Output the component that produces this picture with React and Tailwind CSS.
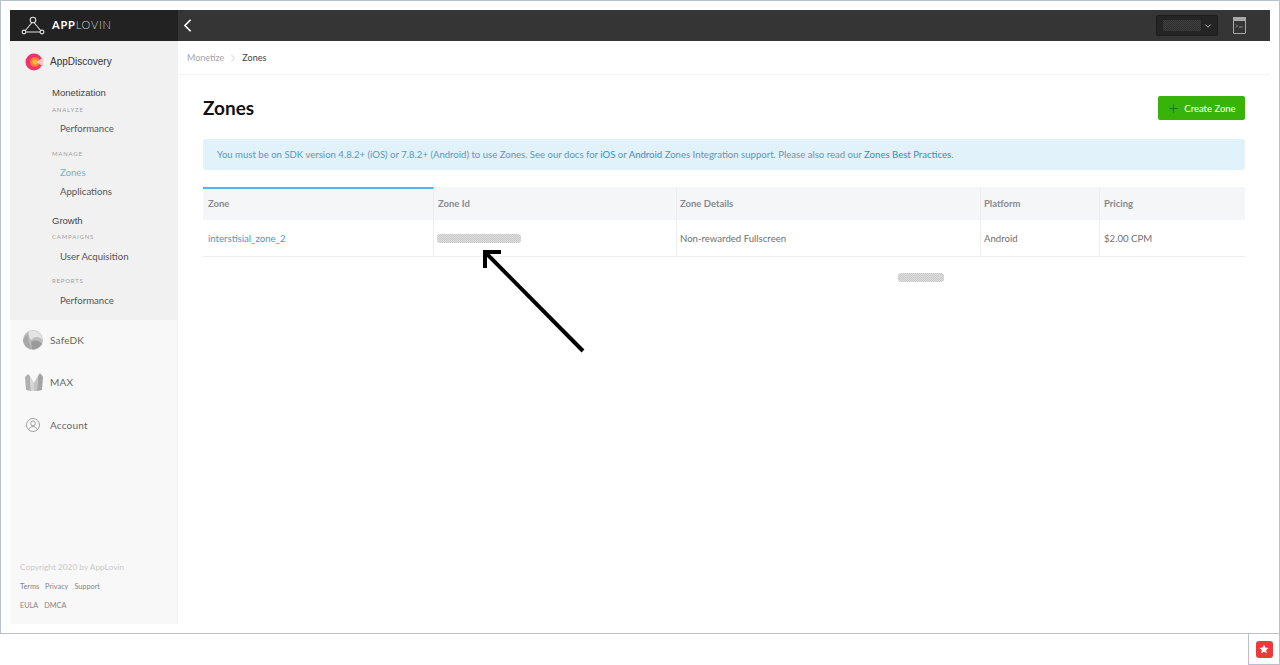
import React from 'react';
import { ChevronLeft, ChevronDown, ChevronRight, Plus } from 'lucide-react';

const dither = 'bg-[repeating-conic-gradient(#c9c9c9_0_25%,#dedede_0_50%)] bg-[length:2px_2px]';

const Logo = () => (
  <svg width="24" height="22" viewBox="0 0 24 22" fill="none" stroke="#e0e0e0" strokeWidth="1.1">
    <path d="M11 7.5 L4 16 M13 7.5 L20 16 M5 17 H19" />
    <circle cx="12" cy="5" r="2.8" />
    <circle cx="3" cy="17" r="1.9" />
    <circle cx="21" cy="17" r="1.9" />
  </svg>
);

const DiscoveryIcon = () => (
  <svg width="18" height="18" viewBox="0 0 18 18">
    <defs>
      <linearGradient id="disc" x1="0" y1="0" x2="1" y2="1">
        <stop offset="0" stopColor="#ef2f6a" />
        <stop offset="1" stopColor="#f0386b" />
      </linearGradient>
    </defs>
    <circle cx="9" cy="9" r="8.5" fill="url(#disc)" />
    <circle cx="10" cy="9" r="5" fill="#fb7a3a" />
    <circle cx="10" cy="9" r="2.6" fill="#fdbb2d" />
    <path d="M11 9 L17.5 5 A8.5 8.5 0 0 1 17.5 13 Z" fill="#fbc4c4" />
  </svg>
);

const SafeIcon = () => (
  <svg width="20" height="20" viewBox="0 0 20 20">
    <circle cx="10" cy="10" r="10" fill="#bdbdbd" />
    <path d="M6 1 C12 -1 19 3 20 10 C16 6 11 6 8 10 C6 7 5 4 6 1 Z" fill="#e4e4e4" />
    <path d="M8 12 C12 9 17 11 19 14 C16 18 12 20 9 19 Z" fill="#9a9a9a" />
    <path d="M0 10 C2 6 4 5 5 4 C5 9 6 14 9 19 C4 19 1 15 0 10 Z" fill="#a8a8a8" />
  </svg>
);

const MaxIcon = () => (
  <svg width="18" height="18" viewBox="0 0 18 18">
    <path d="M0 4 L3 1 L5 3 L6 18 L1 17 Z" fill="#b0b0b0" />
    <path d="M5 3 L9 10 L9 18 L6 18 Z" fill="#d6d6d6" />
    <path d="M9 10 L13 3 L12 18 L9 18 Z" fill="#c4c4c4" />
    <path d="M13 3 L15 0 L18 4 L17 17 L12 18 Z" fill="#a4a4a4" />
  </svg>
);

const AccountIcon = () => (
  <svg width="14" height="14" viewBox="0 0 14 14" fill="none" stroke="#8c8c8c" strokeWidth="0.8" className="mr-[3px]">
    <circle cx="7" cy="7" r="6.5" />
    <circle cx="7" cy="5.4" r="2.4" />
    <path d="M3 11.5 C3.5 9.4 5 8.6 7 8.6 C9 8.6 10.5 9.4 11 11.5" />
  </svg>
);

const TerminalIcon = () => (
  <svg width="13" height="17" viewBox="0 0 13 17" fill="none" stroke="#a8a8a8">
    <rect x="0.5" y="0.5" width="12" height="16" rx="0.5" />
    <rect x="0.5" y="0.5" width="12" height="3" fill="#a8a8a8" />
    <path d="M3 7.5 L4.5 9 L3 10.5 M6 10 H9.5" strokeWidth="0.8" />
  </svg>
);

const SectionLabel = ({ children, className }) => (
  <div className={`pl-[42px] h-[10px] leading-[10px] text-[6px] tracking-[0.8px] text-[#a0a0a0] ${className}`}>{children}</div>
);

const NavItem = ({ children, active, className }) => (
  <div className={`pl-[50px] h-[16px] leading-[16px] text-[9.6px] ${active ? 'text-[#67b5dd]' : 'text-[#555]'} ${className}`}>{children}</div>
);

const GroupTitle = ({ children, className }) => (
  <div className={`pl-[42px] h-[16px] leading-[16px] text-[9.5px] font-['Liberation_Sans',sans-serif] text-[#444] ${className}`}>{children}</div>
);

const ProductRow = ({ icon, label, className }) => (
  <div className={`flex items-center h-[20px] ${className}`}>
    <div className="w-[40px] flex justify-end pr-[7px] shrink-0">{icon}</div>
    <span className="text-[10px] text-[#666] tracking-[0.2px]">{label}</span>
  </div>
);

const Sidebar = () => (
  <aside className="w-[168px] shrink-0 flex flex-col bg-[#f8f8f8] border-r border-[#f0f0f0]">
    <div className="h-[279px] bg-[#f1f1f1]">
      <div className="flex items-center h-[41px] pl-[15px]">
        <DiscoveryIcon />
        <span className="ml-[7px] text-[10px] text-[#333] font-['Liberation_Sans',sans-serif]">AppDiscovery</span>
      </div>
      <GroupTitle className="mt-[3px]">Monetization</GroupTitle>
      <SectionLabel className="mt-[4px]">ANALYZE</SectionLabel>
      <NavItem className="mt-[6px]">Performance</NavItem>
      <SectionLabel className="mt-[12px]">MANAGE</SectionLabel>
      <NavItem className="mt-[6px]" active>Zones</NavItem>
      <NavItem className="mt-[3px]">Applications</NavItem>
      <GroupTitle className="mt-[13px]">Growth</GroupTitle>
      <SectionLabel className="mt-[3px]">CAMPAIGNS</SectionLabel>
      <NavItem className="mt-[7px]">User Acquisition</NavItem>
      <SectionLabel className="mt-[11px]">REPORTS</SectionLabel>
      <NavItem className="mt-[7px]">Performance</NavItem>
    </div>
    <ProductRow className="mt-[10px]" icon={<SafeIcon />} label="SafeDK" />
    <ProductRow className="mt-[22px]" icon={<MaxIcon />} label="MAX" />
    <ProductRow className="mt-[23px]" icon={<AccountIcon />} label="Account" />
    <div className="mt-auto pl-[10px] pb-[12px] text-[#858585]">
      <div className="text-[8.3px] leading-[12px] text-[#c8c8c8]">Copyright 2020 by AppLovin</div>
      <div className="flex gap-[6px] mt-[8px] text-[7.3px] leading-[12px]">
        <span>Terms</span><span>Privacy</span><span>Support</span>
      </div>
      <div className="flex gap-[6px] mt-[7px] text-[7.3px] leading-[12px]">
        <span>EULA</span><span>DMCA</span>
      </div>
    </div>
  </aside>
);

const TopBar = () => (
  <header className="flex h-[31px] shrink-0">
    <div className="w-[168px] bg-[#222] flex items-center pl-[11px]">
      <Logo />
      <span className="ml-[7px] text-[11px] tracking-[0.8px] text-white font-bold">APP<span className="font-light text-[#cfcfcf]">LOVIN</span></span>
    </div>
    <div className="flex-1 bg-[#353535] flex items-center">
      <ChevronLeft size={21} strokeWidth={2} className="-ml-[1px] text-white" />
      <div className="ml-auto w-[62px] h-[21px] bg-[#242424] border border-[#1d1d1d] rounded-[2px] flex items-center justify-between pl-[6px] pr-[4px]">
        <div className="w-[38px] h-[11px] bg-[repeating-conic-gradient(#2e2e2e_0_25%,#3f3f3f_0_50%)] bg-[length:2px_2px]" />
        <ChevronDown size={10} strokeWidth={2} className="text-[#cfcfcf]" />
      </div>
      <div className="ml-[15px] mr-[24px]"><TerminalIcon /></div>
    </div>
  </header>
);

const columns = 'grid grid-cols-[231px_243px_304px_119px_145px]';
const cell = 'flex items-center border-r border-[#eceef0] last:border-r-0';

const ZonesTable = () => (
  <div className="mt-[17px]">
    <div className={`${columns} h-[33px] bg-[#f5f6f8] text-[9.5px] font-bold text-[#868b90]`}>
      <div className={`${cell} pl-[5px] border-t-2 border-t-[#4db6f0]`}>Zone</div>
      <div className={`${cell} pl-[4px] pt-[1px]`}>Zone Id</div>
      <div className={`${cell} pl-[3px] pt-[1px]`}>Zone Details</div>
      <div className={`${cell} pl-[3px] pt-[1px]`}>Platform</div>
      <div className={`${cell} pl-[4px] pt-[1px]`}>Pricing</div>
    </div>
    <div className={`${columns} h-[37px] border-b border-[#eceef0] text-[9.6px] text-[#707070]`}>
      <div className={`${cell} pl-[5px] pt-[2px] text-[#3f97dc]`}>interstisial_zone_2</div>
      <div className={`${cell} pl-[3px]`}><div className={`w-[84px] h-[9px] rounded-[3px] ${dither}`} /></div>
      <div className={`${cell} pl-[3px] pt-[2px]`}>Non-rewarded Fullscreen</div>
      <div className={`${cell} pl-[3px] pt-[2px]`}>Android</div>
      <div className={`${cell} pl-[4px] pt-[2px]`}>$2.00 CPM</div>
    </div>
    <div className={`ml-[695px] mt-[16px] w-[46px] h-[9px] rounded-[3px] ${dither}`} />
  </div>
);

const Main = () => (
  <main className="flex-1 min-w-0 bg-white">
    <div className="flex items-center h-[34px] pl-[9px] border-b border-[#f3f3f3] text-[9px]">
      <span className="text-[#a5a5a5]">Monetize</span>
      <ChevronRight size={12} strokeWidth={1} className="ml-[3px] mr-[3px] text-[#a5a5a5]" />
      <span className="text-[#444]">Zones</span>
    </div>
    <div className="px-[25px]">
      <div className="flex items-center justify-between h-[24px] mt-[21px]">
        <h1 className="text-[19px] font-bold text-[#111]">Zones</h1>
        <button className="w-[87px] h-[24px] rounded-[2px] bg-[#37b30a] flex items-center justify-center gap-[4px] text-[9.5px] text-white">
          <Plus size={13} strokeWidth={1.2} className="text-[#14570a]" />
          <span className="pt-[2px]">Create Zone</span>
        </button>
      </div>
      <div className="mt-[19px] h-[31px] pt-[2px] rounded-[3px] bg-[#e1f2fb] flex items-center pl-[14px] text-[9.57px] text-[#5b98ba]">
        <p>
          You must be on SDK version 4.8.2+ (iOS) or 7.8.2+ (Android) to use Zones. See our docs for{' '}
          <span className="text-[#2a8fd6]">iOS</span> or <span className="text-[#2a8fd6]">Android</span> Zones Integration support. Please also read our{' '}
          <span className="text-[#2a8fd6]">Zones Best Practices</span>.
        </p>
      </div>
      <ZonesTable />
    </div>
  </main>
);

export default function App() {
  return (
    <div className="relative w-[1280px] h-[665px] bg-white overflow-hidden font-['Lato',sans-serif]">
      <div className="h-[634px] border border-[#b9c0cc] px-[9px] pt-[9px] pb-[9px] flex flex-col">
        <TopBar />
        <div className="flex flex-1 min-h-0">
          <Sidebar />
          <Main />
        </div>
      </div>
      {/* annotation arrow over the table */}
      <svg className="absolute left-[478px] top-[245px]" width="110" height="110" viewBox="0 0 110 110" fill="none" stroke="#000" strokeWidth="4">
        <path d="M105 106 L8 8" />
        <path d="M23 7 H7 V23" />
      </svg>
      <div className="absolute left-[1248px] top-[633px] w-[32px] h-[32px] border border-[#b9c0cc] flex items-center justify-center">
        <div className="w-[17px] h-[17px] rounded-[3px] bg-[#ea3a3a] flex items-center justify-center">
          <svg width="10" height="10" viewBox="0 0 24 24" fill="#fff"><path d="M12 1.5l3.2 6.9 7.5.9-5.5 5.2 1.4 7.5L12 18.6l-6.6 3.4 1.4-7.5L1.3 9.3l7.5-.9z" /></svg>
        </div>
      </div>
    </div>
  );
}
